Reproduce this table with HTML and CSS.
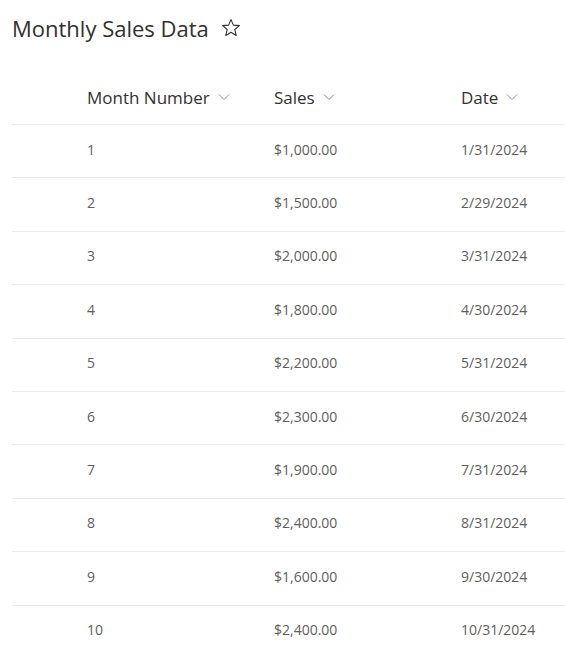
FILE: index.html
```html
<!DOCTYPE html>
<html>
<head>
<meta charset="utf-8">
<link rel="stylesheet" href="styles.css">
</head>
<body>
<div class="page">
  <div class="title-bar">
    <h1 class="title">Monthly Sales Data</h1>
    <svg class="star" width="20" height="20" viewBox="0 0 20 20"><path d="M10 1.6 L12.4 7.1 L18.4 7.6 L13.8 11.5 L15.2 17.5 L10 14.3 L4.8 17.5 L6.2 11.5 L1.6 7.6 L7.6 7.1 Z" fill="none" stroke="#323130" stroke-width="1.1" stroke-linejoin="round"/></svg>
  </div>
  <div class="table">
    <div class="row head">
      <div class="cell">Month Number <svg class="chev" width="12" height="8" viewBox="0 0 12 8"><path d="M1 1.5 L6 6.5 L11 1.5" fill="none" stroke="#8a8886" stroke-width="1"/></svg></div>
      <div class="cell">Sales <svg class="chev" width="12" height="8" viewBox="0 0 12 8"><path d="M1 1.5 L6 6.5 L11 1.5" fill="none" stroke="#8a8886" stroke-width="1"/></svg></div>
      <div class="cell">Date <svg class="chev" width="12" height="8" viewBox="0 0 12 8"><path d="M1 1.5 L6 6.5 L11 1.5" fill="none" stroke="#8a8886" stroke-width="1"/></svg></div>
    </div>
    <div class="row"><div class="cell">1</div><div class="cell">$1,000.00</div><div class="cell">1/31/2024</div></div>
    <div class="row"><div class="cell">2</div><div class="cell">$1,500.00</div><div class="cell">2/29/2024</div></div>
    <div class="row"><div class="cell">3</div><div class="cell">$2,000.00</div><div class="cell">3/31/2024</div></div>
    <div class="row"><div class="cell">4</div><div class="cell">$1,800.00</div><div class="cell">4/30/2024</div></div>
    <div class="row"><div class="cell">5</div><div class="cell">$2,200.00</div><div class="cell">5/31/2024</div></div>
    <div class="row"><div class="cell">6</div><div class="cell">$2,300.00</div><div class="cell">6/30/2024</div></div>
    <div class="row"><div class="cell">7</div><div class="cell">$1,900.00</div><div class="cell">7/31/2024</div></div>
    <div class="row"><div class="cell">8</div><div class="cell">$2,400.00</div><div class="cell">8/31/2024</div></div>
    <div class="row"><div class="cell">9</div><div class="cell">$1,600.00</div><div class="cell">9/30/2024</div></div>
    <div class="row"><div class="cell">10</div><div class="cell">$2,400.00</div><div class="cell">10/31/2024</div></div>
  </div>
</div>
</body>
</html>
```
FILE: styles.css
```css
html, body {
  margin: 0;
  padding: 0;
  background: #ffffff;
}
body {
  font-family: "Open Sans", "Noto Sans", sans-serif;
  color: #323130;
}
.page {
  padding: 0 0 0 12px;
}
.title-bar {
  display: flex;
  align-items: center;
  gap: 12px;
  height: 56px;
}
.title {
  margin: 0;
  font-size: 22px;
  font-weight: 400;
  line-height: 30px;
  color: #323130;
}
.star {
  display: block;
}
.table {
  margin-top: 16px;
}
.row {
  box-sizing: border-box;
  display: grid;
  grid-template-columns: 187px 187px 1fr;
  padding: 0 0 4px 75px;
  height: 53.4px;
  align-items: center;
  border-top: 1px solid #edebe9;
  font-size: 14px;
  color: #605e5c;
}
.row.head {
  border-top: none;
  height: 52px;
  padding-bottom: 2px;
  font-size: 17px;
  color: #323130;
}
.cell {
  display: flex;
  align-items: center;
  gap: 8px;
  white-space: nowrap;
}
.chev {
  display: block;
}
```
